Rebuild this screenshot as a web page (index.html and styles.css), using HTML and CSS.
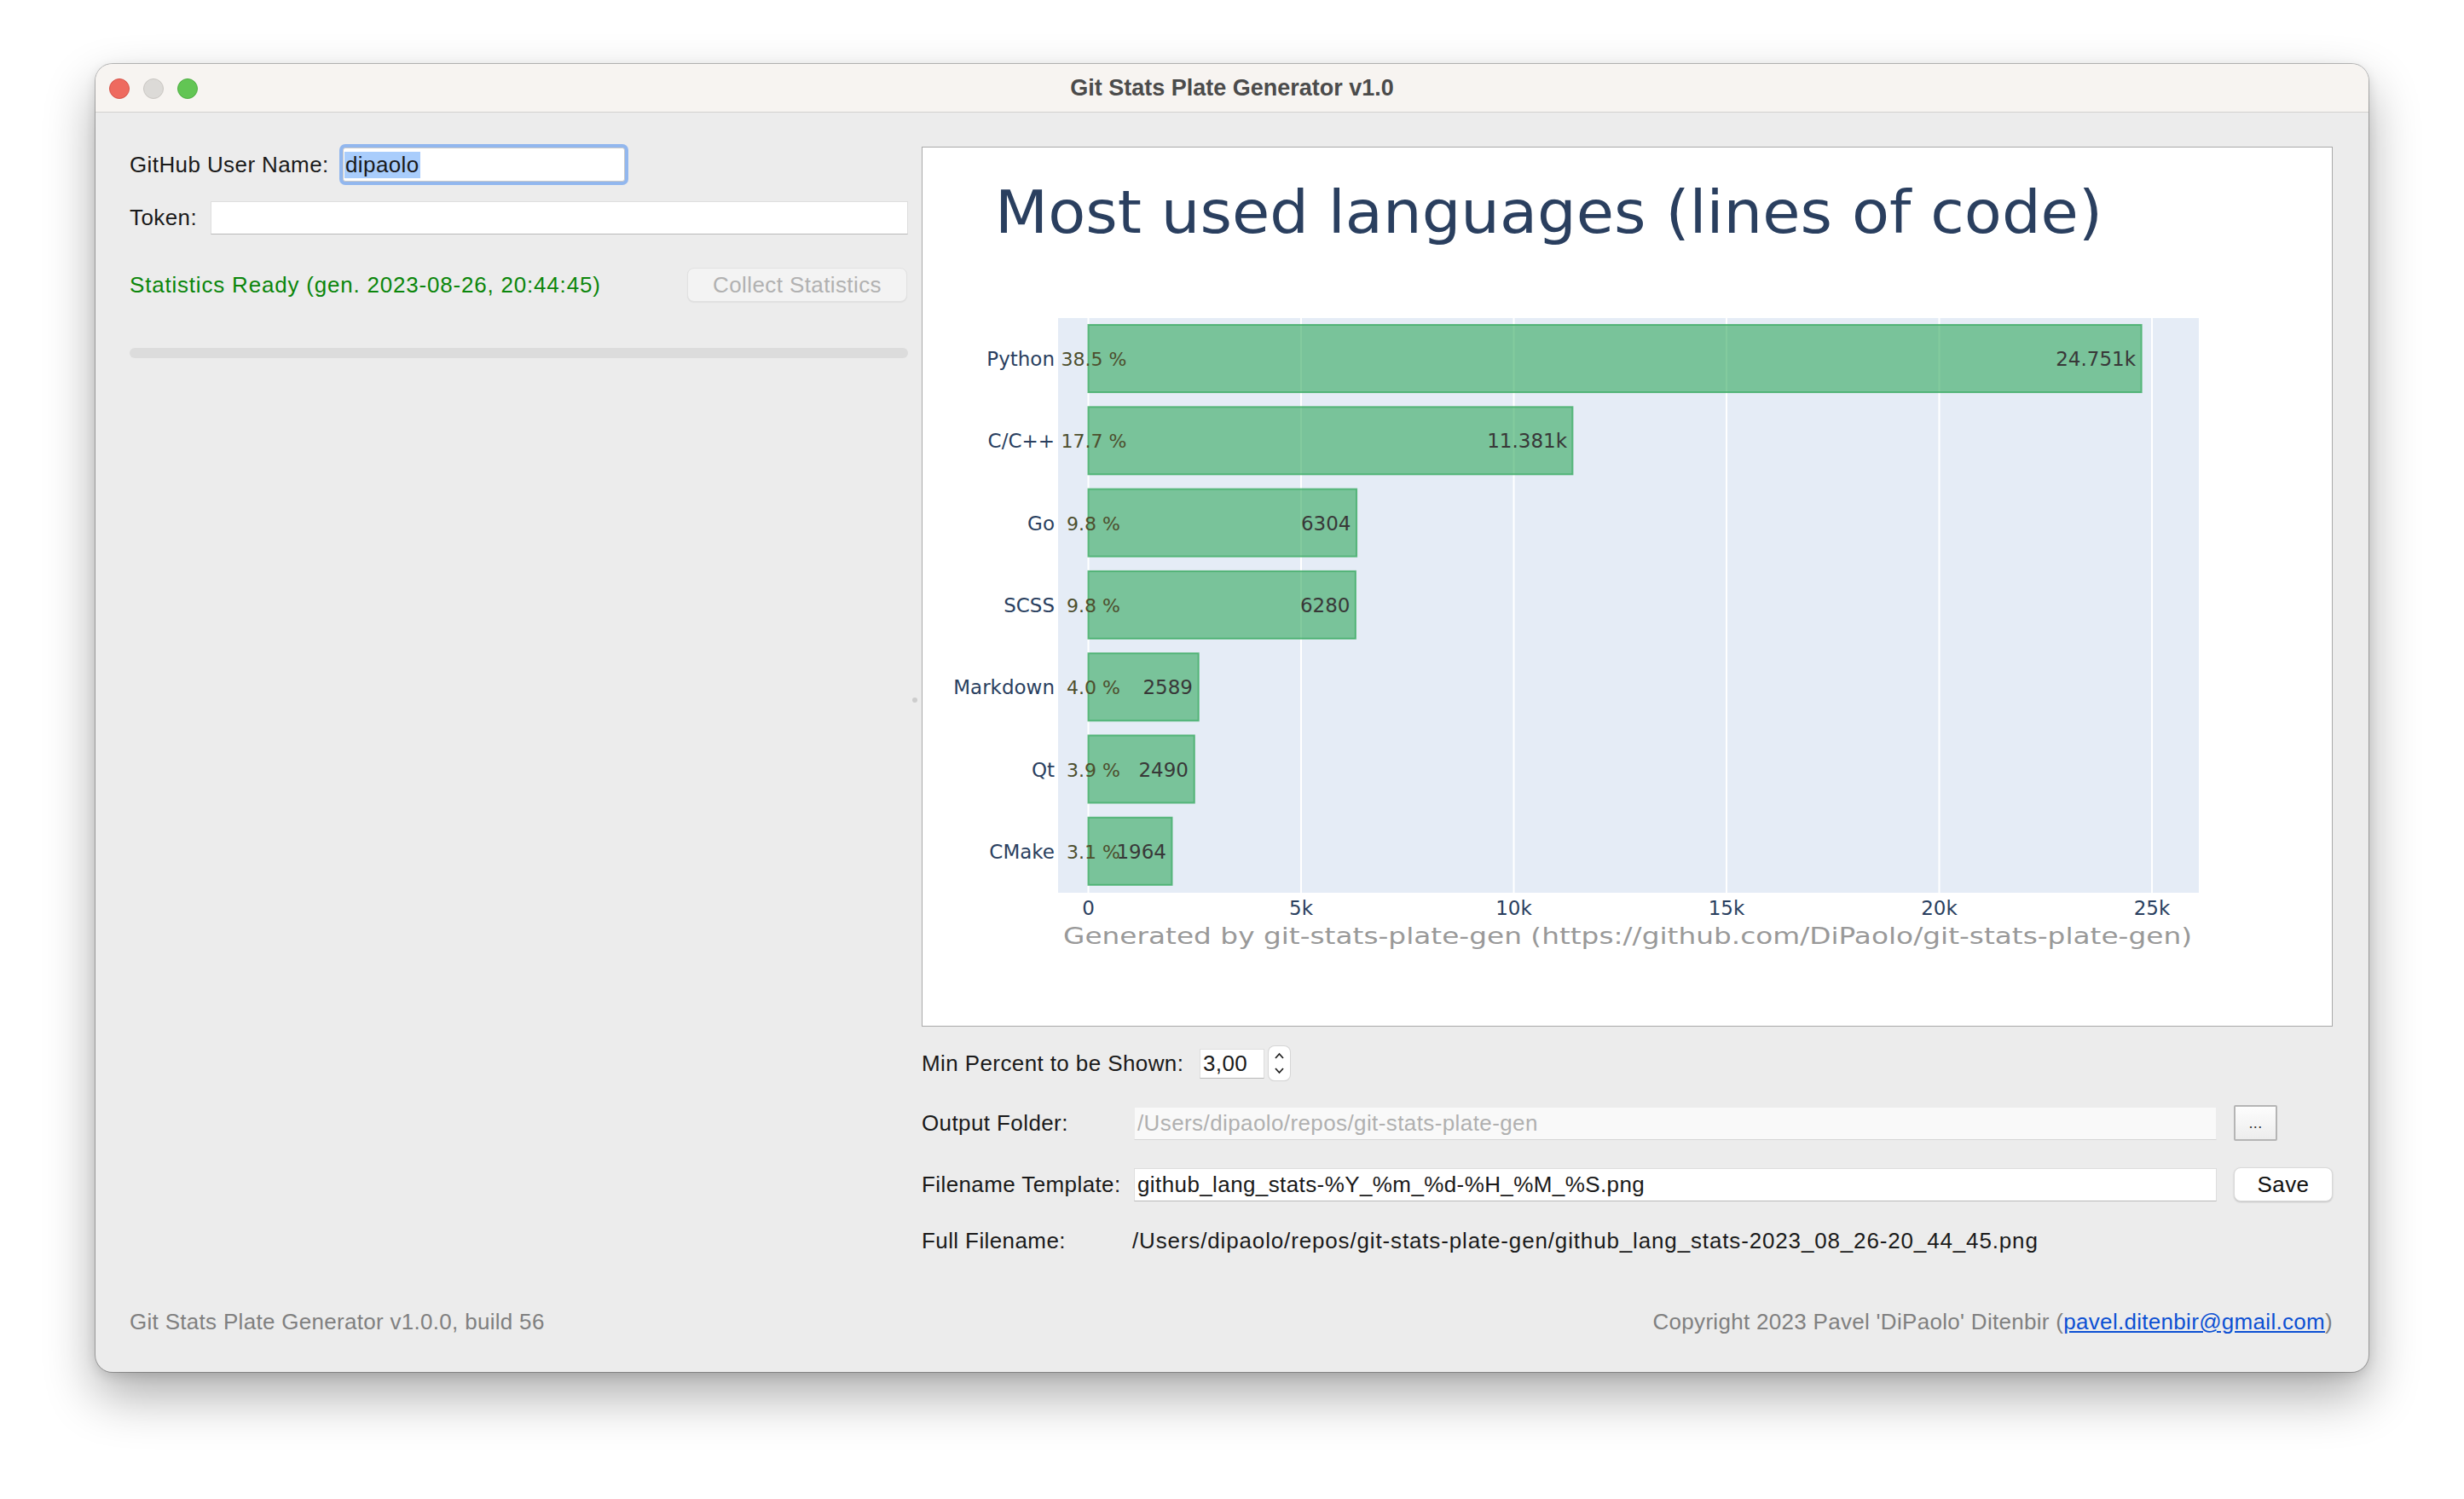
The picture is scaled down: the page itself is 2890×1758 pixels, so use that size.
FILE: index.html
```html
<!DOCTYPE html>
<html lang="en">
<head>
    <meta charset="UTF-8">
    <title>Git Stats Plate Generator v1.0</title>
    <link rel="stylesheet" href="styles.css">
</head>
<body>
    <div class="desktop">
        <div class="window">
            <div class="titlebar">
                <div class="lights">
                    <span class="light red"></span>
                    <span class="light gray"></span>
                    <span class="light green"></span>
                </div>
                <div class="title">Git Stats Plate Generator v1.0</div>
            </div>

            <div class="content">
                <div class="main">
                    <div class="left">
                        <div class="row user-row">
                            <label>GitHub User Name:</label>
                            <div class="input focused"><span class="sel">dipaolo</span></div>
                        </div>
                        <div class="row token-row">
                            <label>Token:</label>
                            <div class="input grow"></div>
                        </div>
                        <div class="row status-row">
                            <span class="status">Statistics Ready (gen. 2023-08-26, 20:44:45)</span>
                            <button class="btn collect">Collect Statistics</button>
                        </div>
                        <div class="progress"></div>
                    </div>

                    <div class="splitter"><span class="handle"></span></div>

                    <div class="right">
                        <div class="plot">
                            <svg class="chart" width="1653" height="1030" viewBox="0 0 1653 1030">
                                <text class="chart-title" x="85" y="100" textLength="1299" lengthAdjust="spacingAndGlyphs">Most used languages (lines of code)</text>

                                <rect x="159" y="200" width="1338" height="674" fill="#e5ecf6"/>
                                <g class="grid">
                                    <line x1="194.5" y1="200" x2="194.5" y2="874"/>
                                    <line x1="444" y1="200" x2="444" y2="874"/>
                                    <line x1="693.5" y1="200" x2="693.5" y2="874"/>
                                    <line x1="943" y1="200" x2="943" y2="874"/>
                                    <line x1="1192.5" y1="200" x2="1192.5" y2="874"/>
                                    <line x1="1442" y1="200" x2="1442" y2="874"/>
                                </g>

                                <g class="bars">
                                    <rect x="194.5" y="208" width="1235.1" height="79"/>
                                    <rect x="194.5" y="304.3" width="567.9" height="79"/>
                                    <rect x="194.5" y="400.6" width="314.6" height="79"/>
                                    <rect x="194.5" y="496.9" width="313.4" height="79"/>
                                    <rect x="194.5" y="593.2" width="129.2" height="79"/>
                                    <rect x="194.5" y="689.5" width="124.3" height="79"/>
                                    <rect x="194.5" y="785.8" width="98" height="79"/>
                                </g>

                                <g class="names">
                                    <text x="155" y="256">Python</text>
                                    <text x="155" y="352.3">C/C++</text>
                                    <text x="155" y="448.6">Go</text>
                                    <text x="155" y="544.9">SCSS</text>
                                    <text x="155" y="641.2">Markdown</text>
                                    <text x="155" y="737.5">Qt</text>
                                    <text x="155" y="833.8">CMake</text>
                                </g>

                                <g class="percents">
                                    <text x="162.5" y="256">38.5 %</text>
                                    <text x="162.5" y="352.3">17.7 %</text>
                                    <text x="169" y="448.6">9.8 %</text>
                                    <text x="169" y="544.9">9.8 %</text>
                                    <text x="169" y="641.2">4.0 %</text>
                                    <text x="169" y="737.5">3.9 %</text>
                                    <text x="169" y="833.8">3.1 %</text>
                                </g>

                                <g class="values">
                                    <text x="1423" y="256">24.751k</text>
                                    <text x="756" y="352.3">11.381k</text>
                                    <text x="502.5" y="448.6">6304</text>
                                    <text x="501.5" y="544.9">6280</text>
                                    <text x="317" y="641.2">2589</text>
                                    <text x="312" y="737.5">2490</text>
                                    <text x="286" y="833.8">1964</text>
                                </g>

                                <g class="ticks">
                                    <text x="194.5" y="900">0</text>
                                    <text x="444" y="900">5k</text>
                                    <text x="693.5" y="900">10k</text>
                                    <text x="943" y="900">15k</text>
                                    <text x="1192.5" y="900">20k</text>
                                    <text x="1442" y="900">25k</text>
                                </g>

                                <text class="source" x="165" y="934" textLength="1324" lengthAdjust="spacingAndGlyphs">Generated by git-stats-plate-gen (https://github.com/DiPaolo/git-stats-plate-gen)</text>
                            </svg>
                        </div>

                        <div class="spin-row">
                            <label>Min Percent to be Shown:</label>
                            <div class="input spin-value">3,00</div>
                            <div class="spin-arrows">
                                <svg width="25" height="40" viewBox="0 0 25 40">
                                    <path d="M8 14 L12.5 9 L17 14" fill="none" stroke="#222" stroke-width="1.8"/>
                                    <path d="M8 26 L12.5 31 L17 26" fill="none" stroke="#222" stroke-width="1.8"/>
                                </svg>
                            </div>
                        </div>

                        <div class="form-grid">
                            <label>Output Folder:</label>
                            <div class="input readonly">/Users/dipaolo/repos/git-stats-plate-gen</div>
                            <div class="cell"><button class="btn browse">...</button></div>

                            <label>Filename Template:</label>
                            <div class="input">github_lang_stats-%Y_%m_%d-%H_%M_%S.png</div>
                            <div class="cell"><button class="btn save">Save</button></div>

                            <label>Full Filename:</label>
                            <div class="full-name">/Users/dipaolo/repos/git-stats-plate-gen/github_lang_stats-2023_08_26-20_44_45.png</div>
                        </div>
                    </div>
                </div>

                <div class="footer">
                    <span>Git Stats Plate Generator v1.0.0, build 56</span>
                    <span>Copyright 2023 Pavel 'DiPaolo' Ditenbir (<a href="#">pavel.ditenbir@gmail.com</a>)</span>
                </div>
            </div>
        </div>
    </div>
</body>
</html>
```

FILE: styles.css
```css
body {
    margin: 0;
    background-color: #ffffff;
    font-family: 'Liberation Sans', Arial, sans-serif;
    font-size: 26px;
    letter-spacing: 0.4px;
    color: #1a1a1a;
}

.desktop {
    width: 2890px;
    height: 1758px;
    padding: 75px 0 0 112px;
    box-sizing: border-box;
}

.window {
    width: 2666px;
    height: 1534px;
    display: flex;
    flex-direction: column;
    background-color: #ececec;
    border-radius: 20px;
    overflow: hidden;
    box-shadow: 0 0 0 1px rgba(0, 0, 0, 0.25), 0 28px 60px rgba(0, 0, 0, 0.32), 0 4px 14px rgba(0, 0, 0, 0.12);
}

/* title bar */
.titlebar {
    height: 56px;
    display: flex;
    align-items: center;
    justify-content: center;
    position: relative;
    background-color: #f7f4f1;
    border-bottom: 1px solid #d3d1cf;
}

.lights {
    position: absolute;
    left: 16px;
    top: 17px;
    display: flex;
    gap: 16px;
}

.light {
    width: 24px;
    height: 24px;
    border-radius: 50%;
    box-sizing: border-box;
}

.light.red { background-color: #ee6a5f; border: 1px solid #d65449; }
.light.gray { background-color: #dcdad7; border: 1px solid #c9c6c2; }
.light.green { background-color: #62c554; border: 1px solid #4fae44; }

.title {
    font-weight: bold;
    font-size: 27px;
    letter-spacing: 0;
    color: #4b4b4b;
}

/* content */
.content {
    flex: 1;
    display: flex;
    flex-direction: column;
    padding: 40px 42px 44px 40px;
}

.main {
    display: flex;
}

.left {
    width: 913px;
    display: flex;
    flex-direction: column;
}

.row {
    display: flex;
    align-items: center;
}

label {
    white-space: nowrap;
}

.input {
    height: 40px;
    box-sizing: border-box;
    background-color: #ffffff;
    border: 1px solid #dedede;
    border-bottom-color: #b9b9b9;
    padding: 0 3px;
    display: flex;
    align-items: center;
    white-space: nowrap;
    overflow: hidden;
}

.user-row {
    height: 42px;
}

.user-row label {
    width: 250px;
}

.input.focused {
    width: 331px;
    border-color: #c9c9c9;
    box-shadow: 0 0 0 4px #92b7ee;
    border-radius: 3px;
    padding: 0 1px;
}

.sel {
    background-color: #a9cdfc;
    line-height: 31px;
    padding: 0 1px;
}

.token-row {
    margin-top: 22px;
}

.token-row label {
    width: 95px;
}

.input.grow {
    flex: 1;
    height: 39px;
}

.status-row {
    margin-top: 39px;
    justify-content: space-between;
}

.status {
    color: #0b860b;
    letter-spacing: 0.8px;
}

.btn {
    font-family: inherit;
    font-size: 26px;
    letter-spacing: 0.4px;
    box-sizing: border-box;
    cursor: pointer;
}

.btn.collect {
    width: 258px;
    height: 40px;
    margin-right: 1px;
    background-color: #f3f3f3;
    color: #b1b1b1;
    border: 1px solid #e1e1e1;
    border-radius: 8px;
    box-shadow: 0 1px 1px rgba(0, 0, 0, 0.06);
}

.progress {
    margin-top: 54px;
    height: 12px;
    border-radius: 6px;
    background-color: #dcdcdc;
}

.splitter {
    width: 16px;
    display: flex;
    align-items: center;
    justify-content: center;
}

.handle {
    width: 6px;
    height: 6px;
    border-radius: 50%;
    background-color: #cdcdcd;
}

/* right side */
.right {
    flex: 1;
    display: flex;
    flex-direction: column;
}

.plot {
    height: 1032px;
    box-sizing: border-box;
    background-color: #ffffff;
    border: 1px solid #a9a9a9;
}

.chart {
    display: block;
    font-family: 'DejaVu Sans', Verdana, sans-serif;
    letter-spacing: 0;
}

.chart-title {
    font-size: 70px;
    fill: #2a3f5f;
}

.grid line {
    stroke: #ffffff;
    stroke-width: 2;
}

.bars rect {
    fill: #31a95d;
    fill-opacity: 0.6;
    stroke: #40ad68;
    stroke-opacity: 0.8;
    stroke-width: 2;
}

.names text {
    font-size: 23px;
    fill: #2a3f5f;
    text-anchor: end;
}

.percents text {
    font-size: 22px;
    fill: #4d4f2e;
}

.values text {
    font-size: 23px;
    fill: #383838;
    text-anchor: end;
}

.ticks text {
    font-size: 23px;
    fill: #2a3f5f;
    text-anchor: middle;
}

.source {
    font-size: 27px;
    fill: #999999;
}

.spin-row {
    margin-top: 23px;
    height: 40px;
    display: flex;
    align-items: center;
}

.spin-row label {
    width: 326px;
}

.input.spin-value {
    width: 76px;
    height: 35px;
    padding: 0 3px;
}

.spin-arrows {
    width: 25px;
    height: 40px;
    margin-left: 5px;
    background-color: #ffffff;
    border-radius: 7px;
    box-shadow: 0 0 0 1px #d6d6d6, 0 1px 1px rgba(0, 0, 0, 0.15);
}

.spin-arrows svg {
    display: block;
}

.form-grid {
    margin-top: 29px;
    display: grid;
    grid-template-columns: 229px 1fr 116px;
    grid-template-rows: 42px 42px 30px;
    column-gap: 20px;
    row-gap: 30px;
    align-items: center;
}

.form-grid .input {
    height: 39px;
}

.input.readonly {
    background-color: #f9f9f9;
    border-color: #ececec;
    border-bottom-color: #d6d6d6;
    color: #b0b0b0;
}

.cell {
    display: flex;
    align-items: center;
}

.btn.browse {
    width: 51px;
    height: 42px;
    padding: 0;
    background: linear-gradient(#fdfdfd, #ededed);
    border: 2px solid #b5b5b5;
    border-radius: 2px;
    font-size: 18px;
    color: #333;
}

.btn.save {
    width: 116px;
    height: 40px;
    background-color: #ffffff;
    border: 1px solid #d9d9d9;
    border-radius: 8px;
    box-shadow: 0 1px 2px rgba(0, 0, 0, 0.18);
    color: #111;
}

.full-name {
    grid-column: 2 / 4;
    margin-left: -2px;
    white-space: nowrap;
    letter-spacing: 0.85px;
}

/* footer */
.footer {
    margin-top: auto;
    display: flex;
    justify-content: space-between;
    line-height: 30px;
    color: #808080;
    letter-spacing: 0.3px;
}

.footer a {
    color: #0b50d3;
}
```
